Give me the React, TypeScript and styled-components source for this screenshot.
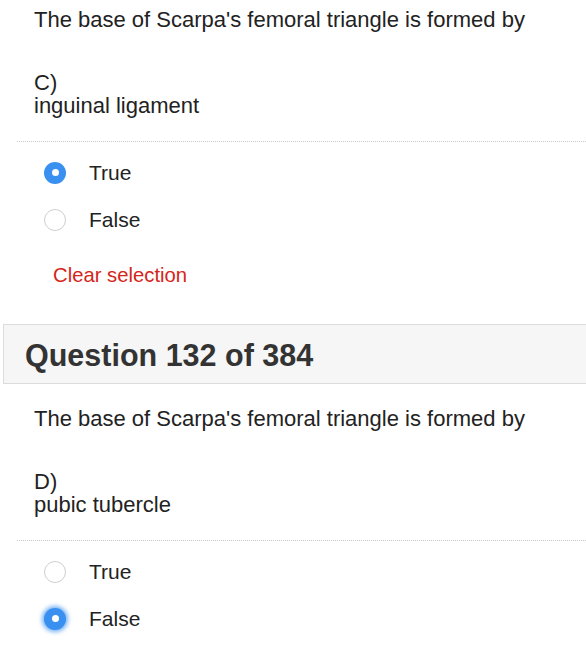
import React from "react";
import styled, { createGlobalStyle } from "styled-components";

const GlobalStyle = createGlobalStyle`
  html, body {
    margin: 0;
    padding: 0;
    background: #ffffff;
    overflow: hidden;
  }
  body {
    font-family: "Liberation Sans", Arial, Helvetica, sans-serif;
    color: #222222;
  }
`;

const Page = styled.div`
  width: 586px;
  display: flex;
  flex-direction: column;
`;

const QuestionBody = styled.section`
  display: flex;
  flex-direction: column;
  padding: 8px 0 0 17px;
`;

const QuestionText = styled.p`
  margin: 0 0 0 17px;
  font-size: 22px;
  line-height: 24px;
  color: #222222;
  white-space: nowrap;
`;

const AnswerBlock = styled.div`
  margin: 39px 0 0 17px;
  font-size: 22px;
  line-height: 23px;
  color: #222222;
`;

const Separator = styled.hr`
  margin: 24px 0 0 0;
  border: 0;
  border-top: 1px dotted #c8c8c8;
  height: 0;
`;

const Options = styled.div`
  display: flex;
  flex-direction: column;
  padding-top: 7px;
`;

const OptionRow = styled.label`
  display: flex;
  align-items: center;
  height: 47px;
  padding-left: 27px;
  font-size: 21px;
  color: #222222;
  cursor: pointer;
`;

const Radio = styled.span<{ $checked: boolean; $focused?: boolean }>`
  box-sizing: border-box;
  width: 22px;
  height: 22px;
  border-radius: 50%;
  flex: none;
  margin-right: 23px;
  display: flex;
  align-items: center;
  justify-content: center;
  background: ${(p) => (p.$checked ? "#3a90f0" : "#ffffff")};
  border: ${(p) => (p.$checked ? "none" : "1px solid #cfcfcf")};
  box-shadow: ${(p) =>
    p.$focused ? "0 0 4px 2px rgba(58, 144, 240, 0.7)" : "none"};

  &::after {
    content: "";
    display: ${(p) => (p.$checked ? "block" : "none")};
    width: 7px;
    height: 7px;
    border-radius: 50%;
    background: #ffffff;
  }
`;

const ClearButton = styled.button`
  align-self: flex-start;
  margin: 20px 0 0 36px;
  padding: 0;
  border: 0;
  background: none;
  font-family: inherit;
  font-size: 20.3px;
  line-height: 24px;
  color: #d4261b;
  cursor: pointer;
`;

const Header = styled.header`
  margin: 37px -20px 15px 3px;
  height: 60px;
  box-sizing: border-box;
  border: 1px solid #dcdcdc;
  background: #f6f6f6;
  display: flex;
  align-items: center;
  padding: 2px 0 0 21px;
`;

const HeaderTitle = styled.h2`
  margin: 0;
  font-size: 30.5px;
  font-weight: bold;
  color: #333333;
  line-height: 34px;
`;

type Opt = { label: string; checked: boolean; focused?: boolean };

const Question: React.FC<{
  text: string;
  letter: string;
  answer: string;
  options: Opt[];
  showClear?: boolean;
}> = ({ text, letter, answer, options, showClear }) => (
  <QuestionBody>
    <QuestionText>{text}</QuestionText>
    <AnswerBlock>
      {letter}
      <br />
      {answer}
    </AnswerBlock>
    <Separator />
    <Options>
      {options.map((o) => (
        <OptionRow key={o.label}>
          <Radio $checked={o.checked} $focused={o.focused} />
          {o.label}
        </OptionRow>
      ))}
    </Options>
    {showClear && <ClearButton>Clear selection</ClearButton>}
  </QuestionBody>
);

export default function App() {
  const q = "The base of Scarpa's femoral triangle is formed by";
  return (
    <Page>
      <GlobalStyle />
      <Question
        text={q}
        letter="C)"
        answer="inguinal ligament"
        options={[
          { label: "True", checked: true },
          { label: "False", checked: false },
        ]}
        showClear
      />
      <Header>
        <HeaderTitle>Question 132 of 384</HeaderTitle>
      </Header>
      <Question
        text={q}
        letter="D)"
        answer="pubic tubercle"
        options={[
          { label: "True", checked: false },
          { label: "False", checked: true, focused: true },
        ]}
      />
    </Page>
  );
}
